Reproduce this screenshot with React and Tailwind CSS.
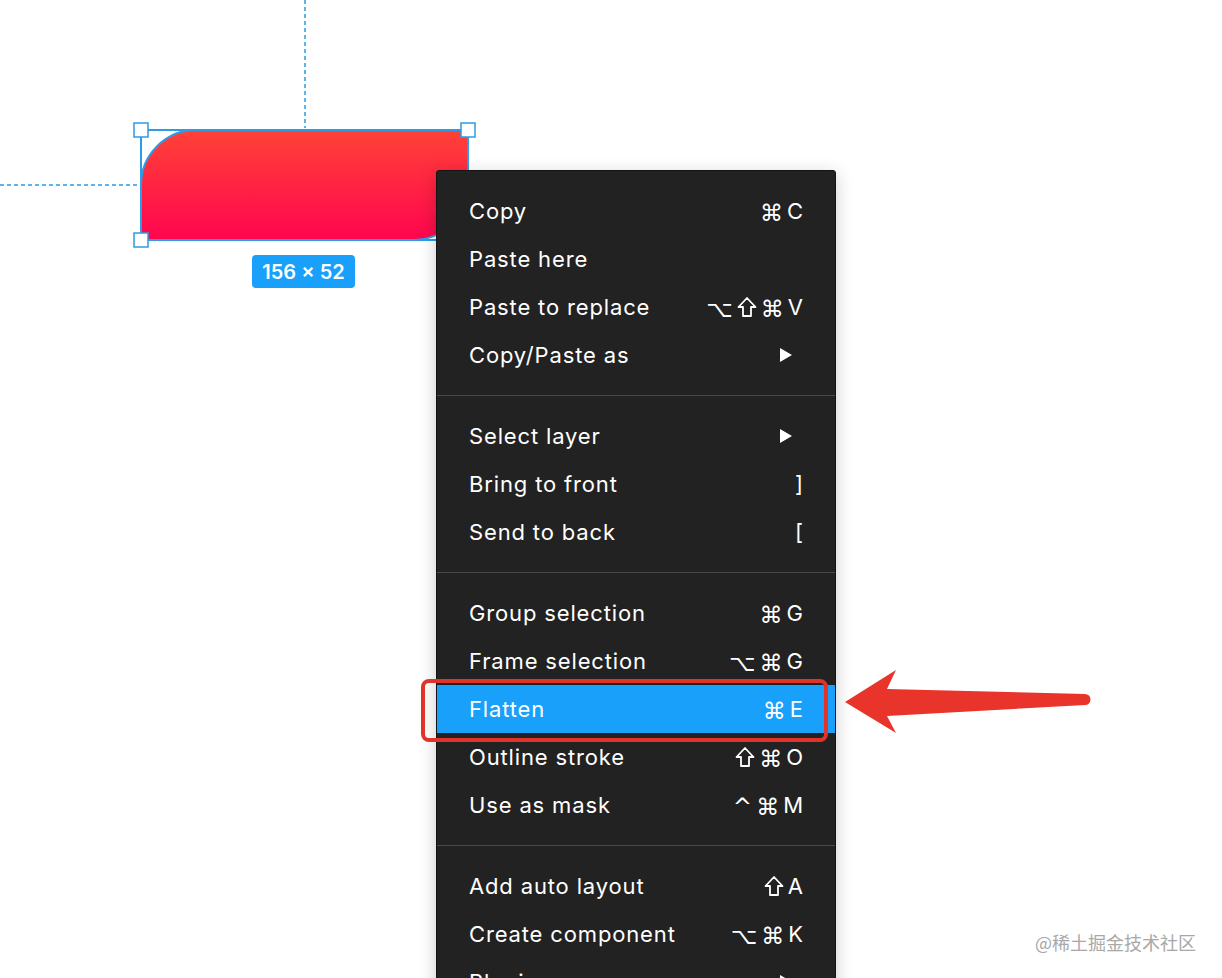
import React from "react";

const sections = [
  [
    { label: "Copy", keys: "⌘C" },
    { label: "Paste here", keys: "" },
    { label: "Paste to replace", keys: "⌥⇧⌘V" },
    { label: "Copy/Paste as", sub: true },
  ],
  [
    { label: "Select layer", sub: true },
    { label: "Bring to front", keys: "]" },
    { label: "Send to back", keys: "[" },
  ],
  [
    { label: "Group selection", keys: "⌘G" },
    { label: "Frame selection", keys: "⌥⌘G" },
    { label: "Flatten", keys: "⌘E", active: true },
    { label: "Outline stroke", keys: "⇧⌘O" },
    { label: "Use as mask", keys: "^⌘M" },
  ],
  [
    { label: "Add auto layout", keys: "⇧A" },
    { label: "Create component", keys: "⌥⌘K" },
    { label: "Plugins", sub: true },
  ],
];

function ShiftIcon() {
  return (
    <svg width="20" height="22" viewBox="0 0 20 22">
      <path d="M10 2 L18.5 11 L14 11 L14 20 L6 20 L6 11 L1.5 11 Z" fill="none" stroke="#fff" strokeWidth="1.8" strokeLinejoin="round" />
    </svg>
  );
}

function Shortcut({ keys }) {
  return (
    <span className="flex items-center gap-[4px]">
      {keys.split("").map((k, i) => {
        if (k === "⇧") return <ShiftIcon key={i} />;
        if (/[A-Z\[\]]/.test(k)) return <span key={i}>{k}</span>;
        return (
          <span key={i} className="translate-y-[2px] font-['DejaVu_Sans',sans-serif] text-[23px] leading-none">
            {k}
          </span>
        );
      })}
    </span>
  );
}

function MenuItem({ item }) {
  return (
    <div
      className={`flex h-12 items-center justify-between px-8 ${
        item.active ? "bg-[#18a0fb]" : ""
      }`}
    >
      <span className="tracking-[0.85px]">{item.label}</span>
      {item.sub ? (
        <svg width="14" height="16" viewBox="0 0 14 16" className="mr-[10px]">
          <path d="M1 1 L13 8 L1 15 Z" fill="#fff" />
        </svg>
      ) : (
        item.keys && <Shortcut keys={item.keys} />
      )}
    </div>
  );
}

export default function App() {
  return (
    <div className="relative h-[978px] w-[1222px] overflow-hidden bg-white font-['Inter',sans-serif]">
      {/* canvas: guides, shape, handles */}
      <svg className="absolute left-0 top-0" width="1222" height="978">
        <defs>
          <linearGradient id="g" x1="0" y1="0" x2="0" y2="1">
            <stop offset="0" stopColor="#ff4237" />
            <stop offset="1" stopColor="#ff054f" />
          </linearGradient>
        </defs>
        <line x1="305" y1="0" x2="305" y2="128" stroke="#2d9ce6" strokeWidth="1.5" strokeDasharray="4 3" />
        <line x1="0" y1="185" x2="139" y2="185" stroke="#2d9ce6" strokeWidth="1.5" strokeDasharray="4 3" />
        <path
          d="M141 240 L141 185 A55 55 0 0 1 196 130 L468 130 L468 185 A55 55 0 0 1 413 240 Z"
          fill="url(#g)"
          stroke="#2d9ce6"
          strokeWidth="2"
        />
        <rect x="141" y="130" width="327" height="110" fill="none" stroke="#2d9ce6" strokeWidth="2" />
        {[
          [141, 130],
          [468, 130],
          [141, 240],
          [468, 240],
        ].map(([x, y], i) => (
          <rect key={i} x={x - 7} y={y - 7} width="14" height="14" fill="#fff" stroke="#2d9ce6" strokeWidth="1.5" />
        ))}
      </svg>

      <div className="absolute left-[252px] top-[255px] flex h-[33px] w-[103px] items-center justify-center rounded-[4px] bg-[#18a0fb] text-[20px] font-semibold text-white">
        156 × 52
      </div>

      {/* context menu */}
      <div className="absolute left-[436px] top-[170px] w-[400px] rounded-[3px] border border-[#141414] bg-[#222222] text-[22px] text-white shadow-[0_4px_18px_rgba(0,0,0,0.2)]">
        {sections.map((sec, i) => (
          <div key={i} className={`py-4 ${i > 0 ? "border-t border-[#4a4a4a]" : ""}`}>
            {sec.map((item) => (
              <MenuItem key={item.label} item={item} />
            ))}
          </div>
        ))}
      </div>

      {/* annotation */}
      <div className="absolute left-[421px] top-[679px] h-[63px] w-[407px] rounded-[8px] border-[4px] border-[#e0332a]" />
      <svg className="absolute left-[840px] top-[660px]" width="260" height="80" viewBox="840 660 260 80">
        <path
          d="M845 702 L896 670 L887 689 L1085 694 A5.5 5.5 0 0 1 1085 705 L887 716 L896 733 Z"
          fill="#e8342a"
          strokeLinejoin="round"
        />
      </svg>

      <div className="absolute left-[1035px] top-[929px] font-['Noto_Sans_CJK_SC',sans-serif] text-[18px] text-[#a8a8a8]">
        @稀土掘金技术社区
      </div>
    </div>
  );
}
